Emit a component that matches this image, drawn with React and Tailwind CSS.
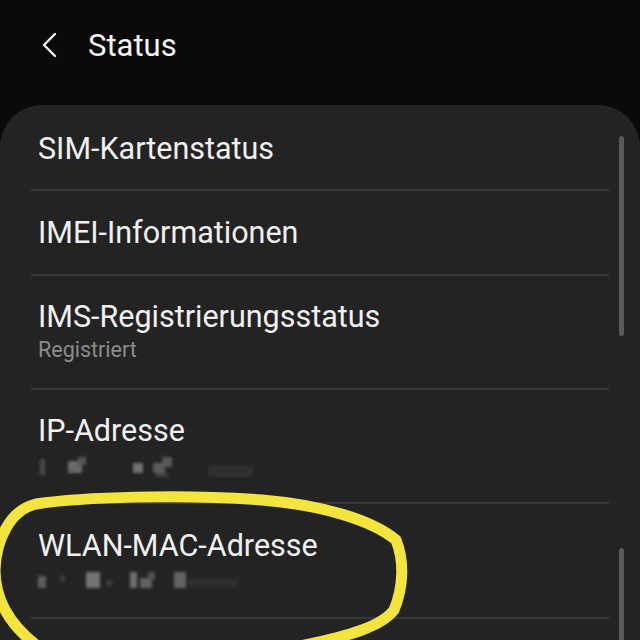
import React from "react";

const font = { fontFamily: "Roboto, 'Noto Sans', sans-serif" };

function Blur({ blocks }) {
  return (
    <div className="relative h-[22px] mt-[8px] blur-[1.5px]">
      {blocks.map((b, i) => (
        <div
          key={i}
          className="absolute"
          style={{ left: b[0], top: b[1], width: b[2], height: b[3], background: b[4] }}
        />
      ))}
    </div>
  );
}

function Divider() {
  return <div className="h-[2px] bg-[#383838]" />;
}

export default function App() {
  return (
    <div className="relative w-[640px] h-[640px] overflow-hidden bg-[#0a0a0a] text-white" style={font}>
      <div className="h-[105px] flex items-start pt-[26px]">
        <div className="flex items-center h-[38px]">
          <svg className="ml-[40px]" width="18" height="26" viewBox="0 0 18 26">
            <path d="M15 2 L4 13 L15 24" fill="none" stroke="#f2f2f2" strokeWidth="2.4" strokeLinecap="round" strokeLinejoin="round" />
          </svg>
          <span className="ml-[30px] text-[31px] leading-none text-[#f4f4f4]">Status</span>
        </div>
      </div>
      <div className="bg-[#232323] rounded-t-[42px] px-[31px] h-[560px]">
        <div className="h-[84px] flex items-center pl-[7px] pt-[4px]">
          <span className="text-[30.5px] text-[#f0f0f0]">SIM-Kartenstatus</span>
        </div>
        <Divider />
        <div className="h-[83px] flex items-center pl-[7px]">
          <span className="text-[30.5px] text-[#f0f0f0]">IMEI-Informationen</span>
        </div>
        <Divider />
        <div className="h-[112px] flex flex-col justify-center pl-[7px]">
          <span className="text-[30.5px] leading-[36px] text-[#f0f0f0]">IMS-Registrierungsstatus</span>
          <span className="text-[21.5px] leading-[30px] text-[#8c8c8c]">Registriert</span>
        </div>
        <Divider />
        <div className="h-[112px] flex flex-col justify-center pl-[7px]">
          <span className="text-[30.5px] leading-[36px] text-[#f0f0f0]">IP-Adresse</span>
          <Blur
            blocks={[
              [2, 2, 5, 16, "#4a4a4a"],
              [30, 4, 14, 12, "#6a6a6a"],
              [40, 0, 8, 8, "#555"],
              [95, 6, 10, 10, "#707070"],
              [115, 6, 12, 10, "#5c5c5c"],
              [124, 0, 10, 10, "#585858"],
              [118, 16, 12, 4, "#444"],
              [170, 8, 45, 12, "#2f2f2f"],
            ]}
          />
        </div>
        <Divider />
        <div className="h-[113px] flex flex-col justify-center pl-[7px]">
          <span className="text-[30.5px] leading-[36px] text-[#f0f0f0]">WLAN-MAC-Adresse</span>
          <Blur
            blocks={[
              [0, 4, 8, 12, "#5e5e5e"],
              [22, 4, 5, 6, "#3e3e3e"],
              [48, 0, 14, 16, "#747474"],
              [68, 8, 6, 6, "#3e3e3e"],
              [92, 0, 7, 16, "#6e6e6e"],
              [102, 6, 12, 10, "#626262"],
              [110, 0, 7, 8, "#525252"],
              [136, 0, 12, 16, "#646464"],
              [150, 6, 50, 10, "#2d2d2d"],
            ]}
          />
        </div>
        <Divider />
      </div>
      {/* scrollbar thumbs */}
      <div className="absolute left-[619px] top-[136px] w-[5px] h-[200px] rounded-full bg-[#5a5a5a]" />
      <div className="absolute left-[619px] top-[548px] w-[5px] h-[100px] rounded-full bg-[#5a5a5a]" />
      {/* yellow hand-drawn circle */}
      <svg className="absolute left-0 top-0 pointer-events-none" width="640" height="640" viewBox="0 0 640 640">
        <path
          d="M300 646 C350 636 382 626 394 610 C404 586 404 560 396 540 C372 520 322 505 262 500 C182 494 82 497 36 504 C10 510 -4 540 -5 570 C-5 600 10 626 40 648"
          fill="none"
          stroke="#f3e43e"
          strokeWidth="11"
          strokeLinecap="round"
        />
      </svg>
    </div>
  );
}
